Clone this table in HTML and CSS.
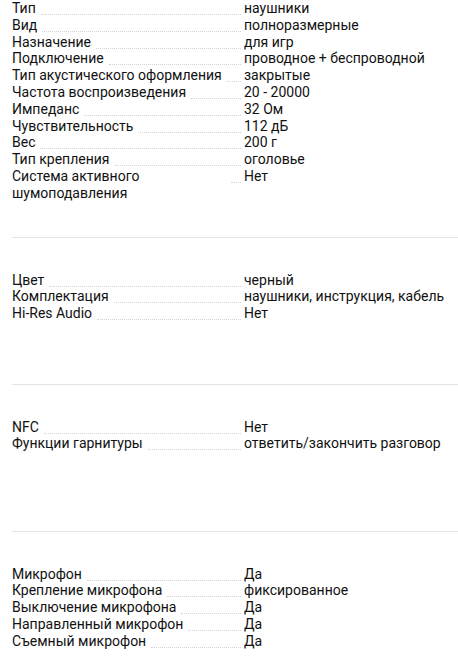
FILE: index.html
```html
<!DOCTYPE html>
<html lang="ru">
<head>
<meta charset="utf-8">
<title>Характеристики</title>
<link rel="stylesheet" href="styles.css">
</head>
<body>
<div class="specs">
  <section class="group group-first">
    <div class="row"><div class="name"><span class="label">Тип</span><span class="dots"></span></div><div class="value">наушники</div></div>
    <div class="row"><div class="name"><span class="label">Вид</span><span class="dots"></span></div><div class="value">полноразмерные</div></div>
    <div class="row"><div class="name"><span class="label">Назначение</span><span class="dots"></span></div><div class="value">для игр</div></div>
    <div class="row"><div class="name"><span class="label">Подключение</span><span class="dots"></span></div><div class="value">проводное + беспроводной</div></div>
    <div class="row"><div class="name"><span class="label">Тип акустического оформления</span><span class="dots"></span></div><div class="value">закрытые</div></div>
    <div class="row"><div class="name"><span class="label">Частота воспроизведения</span><span class="dots"></span></div><div class="value">20 - 20000</div></div>
    <div class="row"><div class="name"><span class="label">Импеданс</span><span class="dots"></span></div><div class="value">32 Ом</div></div>
    <div class="row"><div class="name"><span class="label">Чувствительность</span><span class="dots"></span></div><div class="value">112 дБ</div></div>
    <div class="row"><div class="name"><span class="label">Вес</span><span class="dots"></span></div><div class="value">200 г</div></div>
    <div class="row"><div class="name"><span class="label">Тип крепления</span><span class="dots"></span></div><div class="value">оголовье</div></div>
    <div class="row"><div class="name"><span class="label">Система активного шумоподавления</span><span class="dots"></span></div><div class="value">Нет</div></div>
  </section>
  <hr class="divider">
  <section class="group">
    <div class="row"><div class="name"><span class="label">Цвет</span><span class="dots"></span></div><div class="value">черный</div></div>
    <div class="row"><div class="name"><span class="label">Комплектация</span><span class="dots"></span></div><div class="value">наушники, инструкция, кабель</div></div>
    <div class="row"><div class="name"><span class="label">Hi-Res Audio</span><span class="dots"></span></div><div class="value">Нет</div></div>
  </section>
  <hr class="divider">
  <section class="group">
    <div class="row"><div class="name"><span class="label">NFC</span><span class="dots"></span></div><div class="value">Нет</div></div>
    <div class="row"><div class="name"><span class="label">Функции гарнитуры</span><span class="dots"></span></div><div class="value">ответить/закончить разговор</div></div>
  </section>
  <hr class="divider">
  <section class="group">
    <div class="row"><div class="name"><span class="label">Микрофон</span><span class="dots"></span></div><div class="value">Да</div></div>
    <div class="row"><div class="name"><span class="label">Крепление микрофона</span><span class="dots"></span></div><div class="value">фиксированное</div></div>
    <div class="row"><div class="name"><span class="label">Выключение микрофона</span><span class="dots"></span></div><div class="value">Да</div></div>
    <div class="row"><div class="name"><span class="label">Направленный микрофон</span><span class="dots"></span></div><div class="value">Да</div></div>
    <div class="row"><div class="name"><span class="label">Съемный микрофон</span><span class="dots"></span></div><div class="value">Да</div></div>
  </section>
</div>
</body>
</html>
```
FILE: styles.css
```css
html, body {
  margin: 0;
  padding: 0;
  background: #ffffff;
}

body {
  font-family: Roboto, "Liberation Sans", Arial, sans-serif;
  font-size: 14px;
  line-height: 16.8px;
  color: #111111;
  overflow: hidden;
}

.specs {
  padding-left: 12px;
}

.group {
  min-height: 77px;
}

.row {
  display: grid;
  grid-template-columns: 232px 1fr;
}

.name {
  display: flex;
  align-items: flex-start;
  padding-right: 3px;
}

.label {
  flex: 0 1 auto;
}

.dots {
  flex: 1 0 10px;
  height: 14px;
  margin-left: 5px;
  border-bottom: 1px dotted #d4d4d4;
}

.divider {
  margin: 35px 0 34px 0;
  border: 0;
  height: 1px;
  background: #e4e4e4;
}
```
